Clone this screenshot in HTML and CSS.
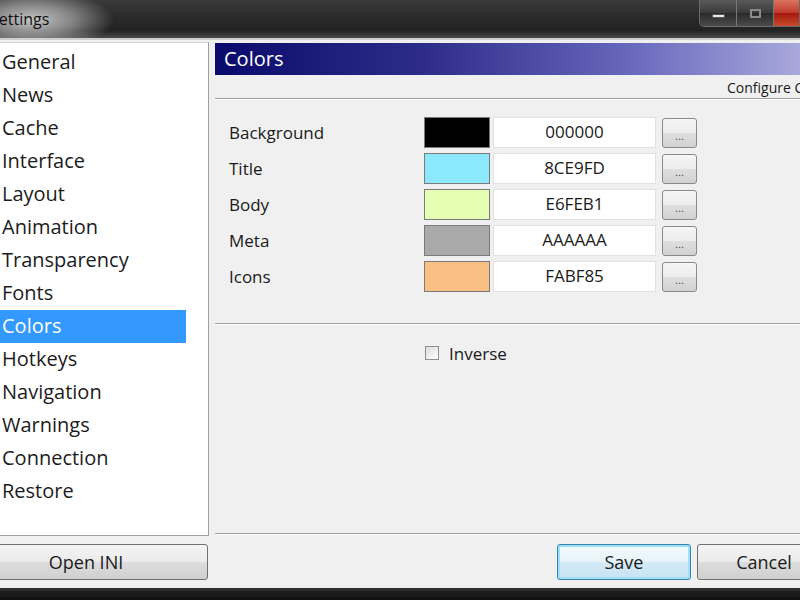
FILE: index.html
```html
<!DOCTYPE html>
<html lang="en">
<head>
    <meta charset="UTF-8">
    <title>Settings</title>
    <link rel="stylesheet" href="styles.css">
</head>
<body>
    <div class="window">
        <div class="titlebar">
            <span class="title">Settings</span>
            <div class="caption">
                <span class="cap cap-min"><i></i></span>
                <span class="cap cap-max"><i></i></span>
                <span class="cap cap-close"></span>
            </div>
        </div>
        <div class="main">
            <div class="side">
                <ul class="list">
                    <li>General</li>
                    <li>News</li>
                    <li>Cache</li>
                    <li>Interface</li>
                    <li>Layout</li>
                    <li>Animation</li>
                    <li>Transparency</li>
                    <li>Fonts</li>
                    <li class="active">Colors</li>
                    <li>Hotkeys</li>
                    <li>Navigation</li>
                    <li>Warnings</li>
                    <li>Connection</li>
                    <li>Restore</li>
                </ul>
                <button class="btn btn-wide">Open INI</button>
            </div>
            <div class="panel">
                <div class="header">Colors</div>
                <div class="sub">Configure Colors</div>
                <div class="sep"></div>
                <div class="rows">
                    <div class="row">
                        <span class="label">Background</span>
                        <span class="swatch" style="background:#000000"></span>
                        <span class="hex">000000</span>
                        <button class="pick">...</button>
                    </div>
                    <div class="row">
                        <span class="label">Title</span>
                        <span class="swatch" style="background:#8CE9FD"></span>
                        <span class="hex">8CE9FD</span>
                        <button class="pick">...</button>
                    </div>
                    <div class="row">
                        <span class="label">Body</span>
                        <span class="swatch" style="background:#E6FEB1"></span>
                        <span class="hex">E6FEB1</span>
                        <button class="pick">...</button>
                    </div>
                    <div class="row">
                        <span class="label">Meta</span>
                        <span class="swatch" style="background:#AAAAAA"></span>
                        <span class="hex">AAAAAA</span>
                        <button class="pick">...</button>
                    </div>
                    <div class="row">
                        <span class="label">Icons</span>
                        <span class="swatch" style="background:#FABF85"></span>
                        <span class="hex">FABF85</span>
                        <button class="pick">...</button>
                    </div>
                </div>
                <div class="sep sep-mid"></div>
                <label class="check">
                    <span class="box"></span>
                    <span>Inverse</span>
                </label>
                <div class="spacer"></div>
                <div class="sep"></div>
                <div class="actions">
                    <button class="btn btn-save">Save</button>
                    <button class="btn">Cancel</button>
                </div>
            </div>
        </div>
        <div class="bottom"></div>
    </div>
</body>
</html>
```

FILE: styles.css
```css
*{
    margin:0;
    padding:0;
    box-sizing:border-box;
}
body{
    width:800px;
    height:600px;
    overflow:hidden;
    background:#f0f0f0;
    font-family:"Open Sans", "Noto Sans", sans-serif;
    color:#1a1a1a;
}
.window{
    display:flex;
    flex-direction:column;
    height:600px;
}
/* title bar */
.titlebar{
    height:40px;
    display:flex;
    overflow:hidden;
    border-bottom:2px solid #cfcfcf;
    background:
        radial-gradient(ellipse 82px 30px at 32px 20px, rgba(205,205,205,0.95), rgba(170,170,170,0.7) 50%, rgba(90,90,90,0) 100%),
        linear-gradient(#3a3a3a, #2a2a2a 45%, #222 80%, #4a4a4a);
}
.title{
    font-size:16px;
    line-height:38px;
    color:#111;
    text-indent:-10px;
    white-space:nowrap;
}
.caption{
    margin-left:auto;
    display:flex;
    height:27px;
    border:1px solid #6a6a6a;
    border-top:none;
    border-radius:0 0 0 5px;
    overflow:hidden;
    width:101px;
    flex-shrink:0;
}
.cap{
    display:flex;
    align-items:center;
    justify-content:center;
    height:26px;
    background:linear-gradient(#5a5a5a, #3a3a3a 50%, #2a2a2a 51%, #4a4a4a);
    border-right:1px solid #777;
}
.cap-min{
    width:37px;
}
.cap-min i{
    display:block;
    width:13px;
    height:4px;
    margin-top:6px;
    background:#e8e8e8;
    border:1px solid #555;
}
.cap-max{
    width:37px;
}
.cap-max i{
    display:block;
    width:11px;
    height:9px;
    border:2px solid #8a8a8a;
}
.cap-close{
    flex:1;
    border-right:none;
    background:linear-gradient(#d9745e, #c0392b 50%, #a5180c 51%, #c84a2e);
}
/* body */
.main{
    flex:1;
    display:flex;
    gap:6px;
    margin-left:-36px;
}
.side{
    width:245px;
    display:flex;
    flex-direction:column;
    padding-top:2px;
}
.list{
    list-style:none;
    height:494px;
    background:#fff;
    border:1px solid #a0a0a0;
    border-top-color:#d0d0d0;
    padding-top:3px;
}
.list li{
    width:221px;
    height:33px;
    line-height:32px;
    padding-left:37px;
    font-size:20px;
    color:#1c1c1c;
}
.list li.active{
    background:#3399ff;
    color:#fff;
}
.btn{
    height:36px;
    width:134px;
    font-family:"Open Sans", "Noto Sans", sans-serif;
    font-size:18px;
    color:#1a1a1a;
    border:1px solid #707070;
    border-radius:3px;
    background:linear-gradient(#f4f4f4, #ebebeb 50%, #dddddd 51%, #cfcfcf);
    flex-shrink:0;
}
.btn-wide{
    width:244px;
    margin-top:8px;
}
.panel{
    flex:1;
    display:flex;
    flex-direction:column;
    overflow:hidden;
    padding-bottom:8px;
}
.header{
    margin-top:3px;
    height:32px;
    line-height:32px;
    padding-left:9px;
    font-size:20px;
    color:#fff;
    background:linear-gradient(90deg, #0a0a6c, #2c2c88 35%, #6666bc 70%, #a8a8dc);
}
.sub{
    height:23px;
    line-height:26px;
    padding-left:512px;
    font-size:14px;
    white-space:nowrap;
}
.sep{
    height:2px;
    border-top:1px solid #a0a0a0;
    border-bottom:1px solid #ffffff;
    flex-shrink:0;
}
.rows{
    display:flex;
    flex-direction:column;
    gap:5px;
    padding:17px 0 0 14px;
}
.row{
    display:flex;
    align-items:center;
    height:31px;
}
.label{
    width:195px;
    font-size:17px;
    line-height:29px;
}
.swatch{
    width:66px;
    height:31px;
    border:1px solid #7a7a7a;
}
.hex{
    width:163px;
    height:31px;
    line-height:28px;
    margin-left:3px;
    text-align:center;
    font-size:17px;
    background:#fff;
    border:1px solid #e2e2e2;
}
.pick{
    width:35px;
    height:30px;
    margin-left:6px;
    border:1px solid #8a8a8a;
    border-radius:3px;
    background:linear-gradient(#f6f6f6, #ececec 50%, #dedede 51%, #d2d2d2);
    font-size:11px;
    color:#444;
    padding-top:6px;
}
.sep-mid{
    margin-top:31px;
}
.check{
    display:flex;
    align-items:center;
    height:16px;
    margin-top:20px;
    padding-left:210px;
    font-size:17px;
}
.box{
    width:14px;
    height:14px;
    margin-right:10px;
    border:1px solid #8e8f8f;
    background:linear-gradient(135deg, #dcdcdc, #ffffff);
}
.spacer{
    flex:1;
}
.actions{
    display:flex;
    gap:6px;
    margin-top:9px;
    padding-left:342px;
}
.btn-save{
    border-color:#3c7fb1;
    box-shadow:inset 0 0 0 2px #9ee0f6;
    background:linear-gradient(#f4fafd, #e6f3fa 50%, #d4ebf7 51%, #c6e2f2);
}
.bottom{
    height:12px;
    background:#1b1b1b;
    border-top:3px solid #2e2e2e;
    border-bottom:3px solid #101010;
    flex-shrink:0;
}
```
